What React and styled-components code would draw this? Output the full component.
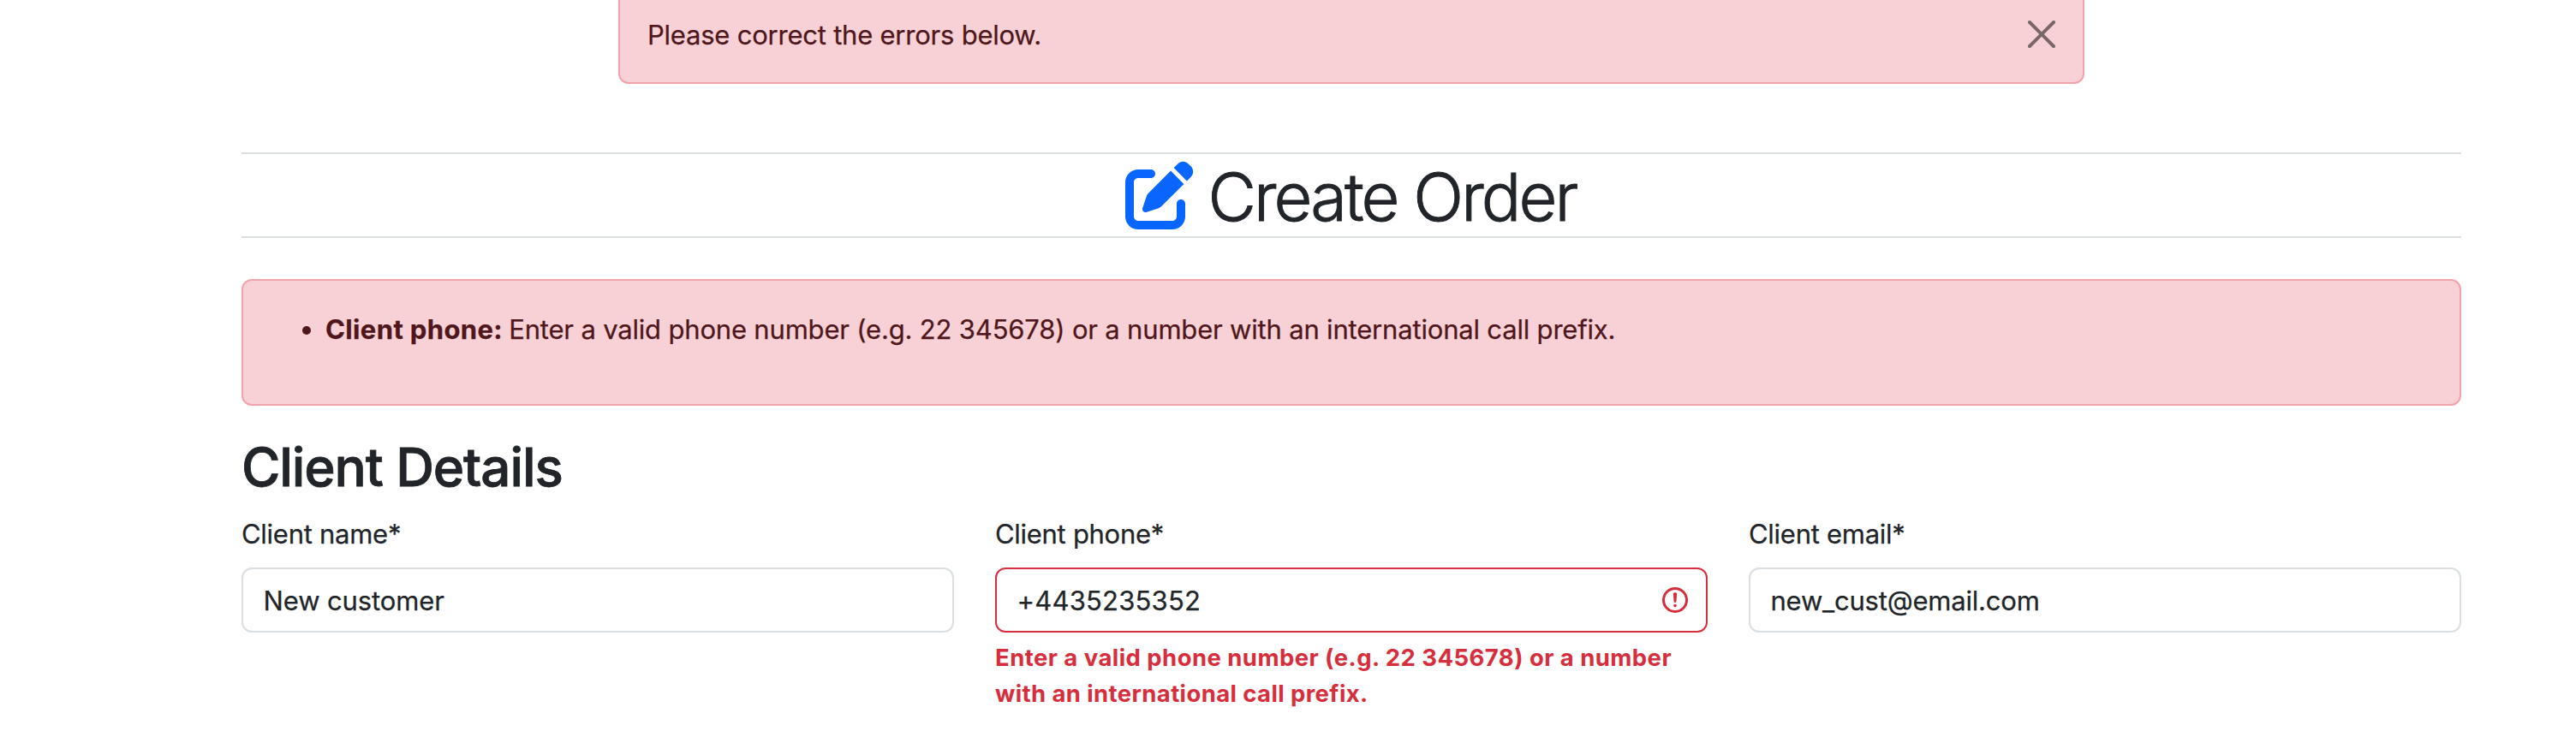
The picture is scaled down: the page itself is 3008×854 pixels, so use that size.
import React from "react";
import styled, { createGlobalStyle } from "styled-components";
import { FaPenToSquare } from "react-icons/fa6";

const colors = {
  text: "#212529",
  border: "#dadfe4",
  primary: "#0866ff",
  danger: "#d62e3c",
  dangerText: "#4f161b",
  dangerBg: "#f7d1d5",
  dangerBorder: "#f0a2ab",
};

const GlobalStyle = createGlobalStyle`
  *, *::before, *::after { box-sizing: border-box; }
  html, body { margin: 0; background: #fff; }
  body {
    height: 854px;
    overflow: hidden;
    color: ${colors.text};
    font-family: Inter, "Liberation Sans", sans-serif;
    font-size: 31px;
    line-height: 48px;
    -webkit-text-stroke: 0.25px currentColor;
  }
`;

const Page = styled.main`
  display: flex;
  flex-direction: column;
  width: 2592px;
  height: 854px;
  margin-left: 282px;
`;

const Alert = styled.div`
  border: 2px solid ${colors.dangerBorder};
  border-radius: 12px;
  background: ${colors.dangerBg};
  color: ${colors.dangerText};
`;

const MessageAlert = styled(Alert)`
  display: flex;
  align-items: flex-start;
  justify-content: space-between;
  align-self: center;
  width: 1712px;
  height: 98px;
  padding: 17px 32px 31px;
  border-top: 0;
  border-top-left-radius: 0;
  border-top-right-radius: 0;
`;

const Tracked = styled.span`
  letter-spacing: ${(p) => p.$spacing || 0}px;
`;

const CloseButton = styled.button`
  display: flex;
  margin-top: 7px;
  padding: 0;
  border: 0;
  background: none;
  opacity: 0.5;
  svg { width: 32px; height: 32px; }
`;

const TitleBar = styled.h1`
  display: flex;
  align-items: center;
  justify-content: center;
  gap: 17px;
  height: 100px;
  margin: 80px 0 48px;
  padding-right: 2px;
  border-top: 2px solid ${colors.border};
  border-bottom: 2px solid ${colors.border};
  font-size: 77.5px;
  font-weight: 300;
  line-height: 96px;
  white-space: nowrap;
`;

const TitleIcon = styled(FaPenToSquare)`
  width: 80px;
  height: 80px;
  color: ${colors.primary};
`;

const TitleText = styled(Tracked)`
  padding-top: 3px;
  -webkit-text-stroke: 0.9px currentColor;
`;

const ErrorSummary = styled(Alert)`
  height: 148px;
  padding: 33px 32px 31px;
`;

const ErrorList = styled.ul`
  margin: 0;
  padding-left: 64px;
  letter-spacing: -1.6px;
`;

const SectionTitle = styled.h2`
  margin: 34px 0 14px;
  font-size: 62px;
  font-weight: 500;
  line-height: 76.8px;
  letter-spacing: -1.13px;
  -webkit-text-stroke: 0.8px currentColor;
`;

const FieldRow = styled.div`
  display: grid;
  grid-template-columns: repeat(3, 1fr);
  gap: 48px;
`;

const Field = styled.div`
  display: flex;
  flex-direction: column;
`;

const Label = styled.label`
  margin-bottom: 15px;
  padding-top: 1px;
`;

const Control = styled.div`
  display: flex;
  align-items: center;
  height: 76px;
  padding: 0 18px 0 23.5px;
  border: 2px solid ${(p) => (p.$invalid ? colors.danger : colors.border)};
  border-radius: 12px;
  background: #fff;
`;

const Input = styled.input`
  flex: 1;
  min-width: 0;
  height: 50px;
  padding: 2px 0 0;
  border: 0;
  outline: 0;
  background: none;
  color: inherit;
  font: inherit;
  -webkit-text-stroke: inherit;
  letter-spacing: ${(p) => p.$spacing || 0}px;
`;

const Feedback = styled.div`
  margin-top: 8px;
  color: ${colors.danger};
  font-size: 27.5px;
  font-weight: 700;
  line-height: 42px;
  -webkit-text-stroke: 0;
`;

const InvalidIcon = () => (
  <svg width="36" height="36" viewBox="0 0 12 12" fill="none" stroke={colors.danger}>
    <circle cx="6" cy="6" r="4.5" />
    <path strokeLinejoin="round" d="M5.8 3.6h.4L6 6.5z" />
    <circle cx="6" cy="8.2" r=".6" fill={colors.danger} stroke="none" />
  </svg>
);

const CloseIcon = () => (
  <svg viewBox="0 0 16 16" fill="#000">
    <path d="M.293.293a1 1 0 0 1 1.414 0L8 6.586 14.293.293a1 1 0 1 1 1.414 1.414L9.414 8l6.293 6.293a1 1 0 0 1-1.414 1.414L8 9.414l-6.293 6.293a1 1 0 0 1-1.414-1.414L6.586 8 .293 1.707a1 1 0 0 1 0-1.414z" />
  </svg>
);

const fields = [
  { id: "name", label: "Client name*", value: "New customer", labelSpacing: -0.27, spacing: -0.12 },
  {
    id: "phone",
    label: "Client phone*",
    value: "+4435235352",
    labelSpacing: -0.29,
    spacing: 0.2,
    errors: [
      ["Enter a valid phone number (e.g. 22 345678) or a number", 0.44],
      ["with an international call prefix.", 0.38],
    ],
  },
  { id: "email", label: "Client email*", value: "new_cust@email.com", labelSpacing: -0.27, spacing: -0.21 },
];

export default function App() {
  return (
    <>
      <GlobalStyle />
      <Page>
        <MessageAlert role="alert">
          <Tracked $spacing={-0.224}>Please correct the errors below.</Tracked>
          <CloseButton aria-label="Close">
            <CloseIcon />
          </CloseButton>
        </MessageAlert>
        <TitleBar>
          <TitleIcon />
          <TitleText $spacing={-2.94}>Create Order</TitleText>
        </TitleBar>
        <ErrorSummary>
          <ErrorList>
            <li>
              <Tracked as="strong" $spacing={0.38}>Client phone:</Tracked>{" "}
              <Tracked $spacing={-0.183}>
                Enter a valid phone number (e.g. 22 345678) or a number with an international call prefix.
              </Tracked>
            </li>
          </ErrorList>
        </ErrorSummary>
        <SectionTitle>Client Details</SectionTitle>
        <FieldRow>
          {fields.map((f) => (
            <Field key={f.id}>
              <Label htmlFor={f.id}>
                <Tracked $spacing={f.labelSpacing}>{f.label}</Tracked>
              </Label>
              <Control $invalid={!!f.errors}>
                <Input id={f.id} defaultValue={f.value} $spacing={f.spacing} />
                {f.errors && <InvalidIcon />}
              </Control>
              {f.errors && (
                <Feedback>
                  {f.errors.map(([line, spacing]) => (
                    <div key={line}>
                      <Tracked $spacing={spacing}>{line}</Tracked>
                    </div>
                  ))}
                </Feedback>
              )}
            </Field>
          ))}
        </FieldRow>
      </Page>
    </>
  );
}
